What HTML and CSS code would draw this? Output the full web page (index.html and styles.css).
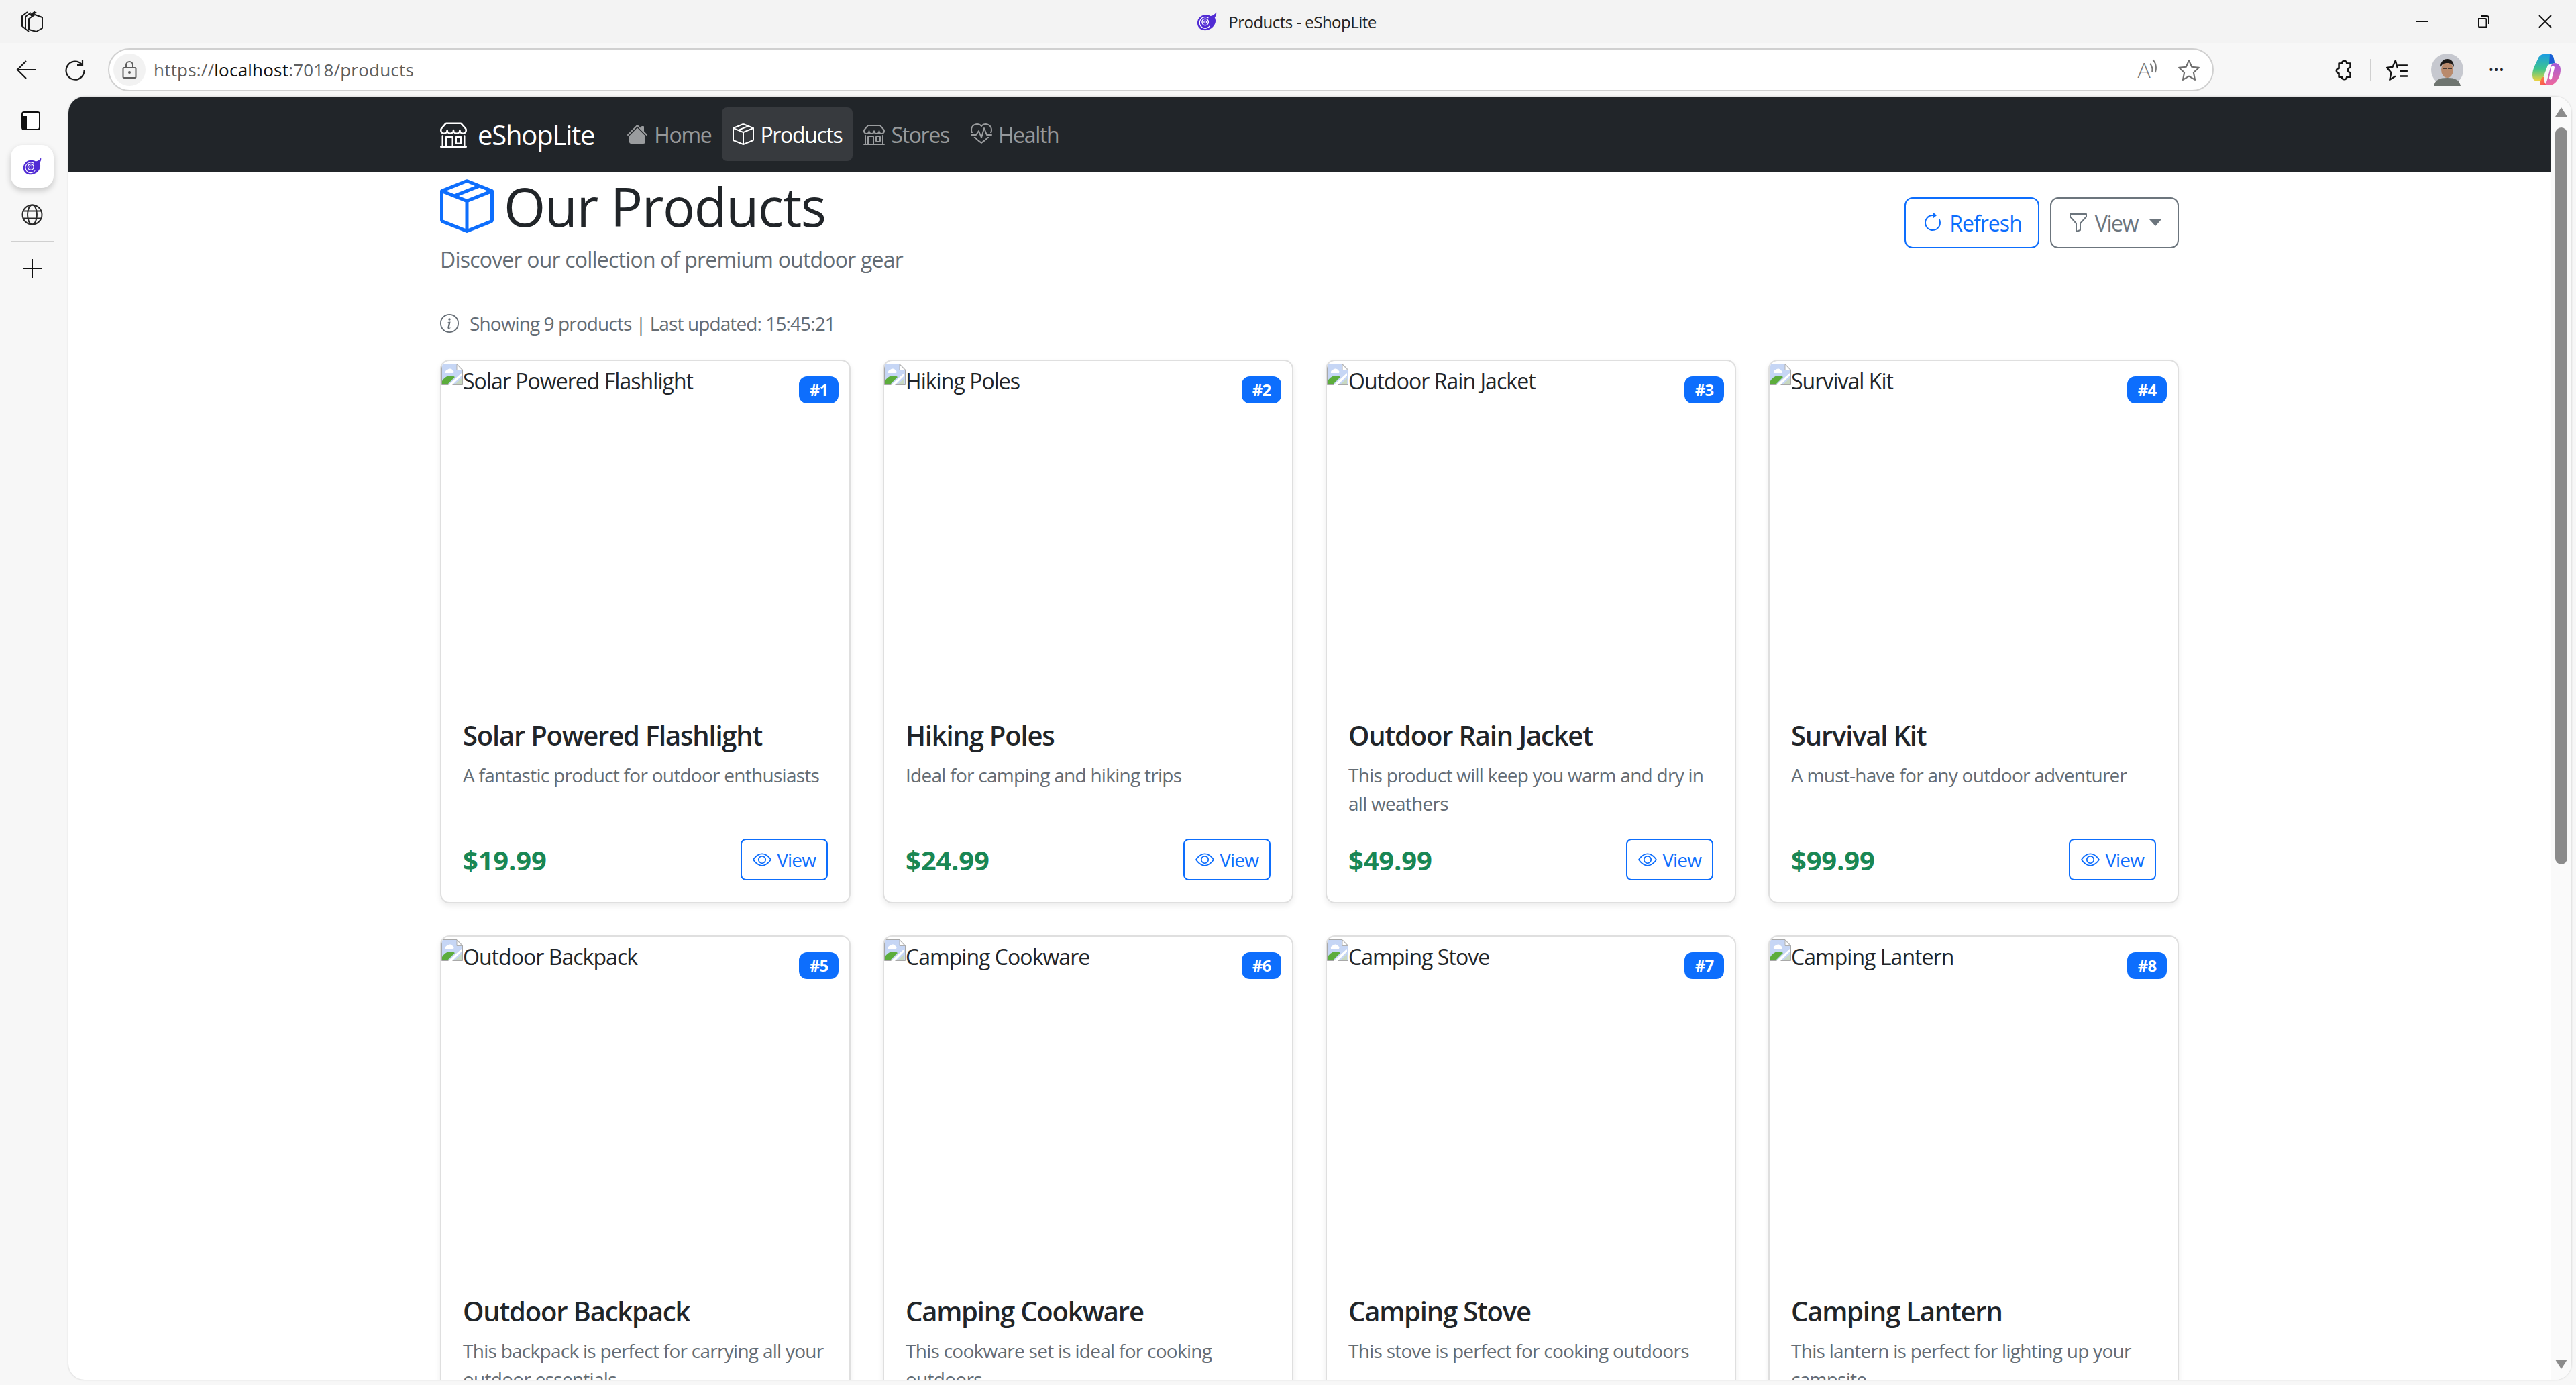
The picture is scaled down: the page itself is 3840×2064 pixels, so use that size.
FILE: index.html
```html
<!DOCTYPE html>
<html>
<head>
	<title>Products - eShopLite</title>
	<link rel="stylesheet" href="styles.css">
</head>
<body>

<svg class="defs" width="0" height="0">
	<symbol id="i-box" viewBox="0 0 16 16"><path d="M8.186 1.113a.5.5 0 0 0-.372 0L1.846 3.5l2.404.961L10.404 2l-2.218-.887zm3.564 1.426L5.596 5 8 5.961 14.154 3.5l-2.404-.961zm3.25 1.7-6.5 2.6v7.922l6.5-2.6V4.24zM7.5 14.762V6.838L1 4.239v7.925l6.5 2.6zM7.443.184a1.5 1.5 0 0 1 1.114 0l7.129 2.852A.5.5 0 0 1 16 3.5v8.662a1 1 0 0 1-.629.928l-7.185 2.874a.5.5 0 0 1-.372 0L.63 13.09a1 1 0 0 1-.63-.928V3.5a.5.5 0 0 1 .314-.464L7.443.184z"/></symbol>
	<symbol id="i-shop" viewBox="0 0 16 16"><path d="M2.97 1.35A1 1 0 0 1 3.73 1h8.54a1 1 0 0 1 .76.35l2.609 3.044A1.5 1.5 0 0 1 16 5.37v.255a2.375 2.375 0 0 1-4.25 1.458A2.371 2.371 0 0 1 9.875 8 2.37 2.37 0 0 1 8 7.083 2.37 2.37 0 0 1 6.125 8a2.37 2.37 0 0 1-1.875-.917A2.375 2.375 0 0 1 0 5.625V5.37a1.5 1.5 0 0 1 .361-.976l2.61-3.045zm1.78 4.275a1.375 1.375 0 0 0 2.75 0 .5.5 0 0 1 1 0 1.375 1.375 0 0 0 2.75 0 .5.5 0 0 1 1 0 1.375 1.375 0 1 0 2.75 0V5.37a.5.5 0 0 0-.12-.325L12.27 2H3.73L1.12 5.045A.5.5 0 0 0 1 5.37v.255a1.375 1.375 0 0 0 2.75 0 .5.5 0 0 1 1 0zM1.5 8.5A.5.5 0 0 1 2 9v6h1v-5a1 1 0 0 1 1-1h3a1 1 0 0 1 1 1v5h6V9a.5.5 0 0 1 1 0v6h.5a.5.5 0 0 1 0 1H.5a.5.5 0 0 1 0-1H1V9a.5.5 0 0 1 .5-.5zM4 15h3v-5H4v5zm5-5a1 1 0 0 1 1-1h2a1 1 0 0 1 1 1v3a1 1 0 0 1-1 1h-2a1 1 0 0 1-1-1v-3zm3 0h-2v3h2v-3z"/></symbol>
	<symbol id="i-house" viewBox="0 0 16 16"><path d="M8.707 1.5a1 1 0 0 0-1.414 0L.646 8.146a.5.5 0 0 0 .708.708L8 2.207l6.646 6.647a.5.5 0 0 0 .708-.708L13 5.793V2.5a.5.5 0 0 0-.5-.5h-1a.5.5 0 0 0-.5.5v1.293L8.707 1.5Z"/><path d="m8 3.293 6 6V13.5a1.5 1.5 0 0 1-1.5 1.5h-9A1.5 1.5 0 0 1 2 13.5V9.293l6-6Z"/></symbol>
	<symbol id="i-heart" viewBox="0 0 16 16"><path d="m8 2.748-.717-.737C5.6.281 2.514.878 1.4 3.053.918 3.995.78 5.323 1.508 7H.43c-2.128-5.697 4.165-8.83 7.394-5.857.06.055.119.112.176.171a3.12 3.12 0 0 1 .176-.17c3.23-2.974 9.522.159 7.394 5.856h-1.078c.728-1.677.59-3.005.108-3.947C13.486.878 10.4.28 8.717 2.01L8 2.748ZM2.212 10h1.315C4.593 11.183 6.05 12.458 8 13.795c1.949-1.337 3.407-2.612 4.473-3.795h1.315c-1.265 1.566-3.14 3.25-5.788 5-2.648-1.75-4.523-3.434-5.788-5Z"/><path d="M10.464 3.314a.5.5 0 0 0-.945.049L7.921 8.956 6.464 5.314a.5.5 0 0 0-.88-.091L3.732 8H.5a.5.5 0 0 0 0 1H4a.5.5 0 0 0 .416-.223l1.473-2.209 1.647 4.118a.5.5 0 0 0 .945-.049l1.598-5.593 1.457 3.642A.5.5 0 0 0 12 9h3.5a.5.5 0 0 0 0-1h-3.162l-1.874-4.686Z"/></symbol>
	<symbol id="i-refresh" viewBox="0 0 16 16"><path d="M8 3a5 5 0 1 0 4.546 2.914.5.5 0 0 1 .908-.417A6 6 0 1 1 8 2v1z"/><path d="M8 4.466V.534a.25.25 0 0 1 .41-.192l2.36 1.966c.12.1.12.284 0 .384L8.41 4.658A.25.25 0 0 1 8 4.466z"/></symbol>
	<symbol id="i-funnel" viewBox="0 0 16 16"><path d="M1.5 1.5A.5.5 0 0 1 2 1h12a.5.5 0 0 1 .5.5v2a.5.5 0 0 1-.128.334L10 8.692V13.5a.5.5 0 0 1-.342.474l-3 1A.5.5 0 0 1 6 14.5V8.692L1.628 3.834A.5.5 0 0 1 1.5 3.5v-2zm1 .5v1.308l4.372 4.858A.5.5 0 0 1 7 8.5v5.306l2-.666V8.5a.5.5 0 0 1 .128-.334L13.5 3.308V2h-11z"/></symbol>
	<symbol id="i-eye" viewBox="0 0 16 16"><path d="M16 8s-3-5.5-8-5.5S0 8 0 8s3 5.5 8 5.5S16 8 16 8zM1.173 8a13.133 13.133 0 0 1 1.66-2.043C4.12 4.668 5.88 3.5 8 3.5c2.12 0 3.879 1.168 5.168 2.457A13.133 13.133 0 0 1 14.828 8c-.058.087-.122.183-.195.288-.335.48-.83 1.12-1.465 1.755C11.879 11.332 10.119 12.5 8 12.5c-2.12 0-3.879-1.168-5.168-2.457A13.134 13.134 0 0 1 1.172 8z"/><path d="M8 5.500a2.500 2.500 0 1 0 0 5 2.500 2.500 0 0 0 0-5zM4.500 8a3.500 3.500 0 1 1 7 0 3.500 3.500 0 0 1-7 0z"/></symbol>
	<symbol id="i-info" viewBox="0 0 16 16"><path d="M8 15A7 7 0 1 1 8 1a7 7 0 0 1 0 14zm0 1A8 8 0 1 0 8 0a8 8 0 0 0 0 16z"/><path d="m8.93 6.588-2.29.287-.082.38.45.083c.294.07.352.176.288.469l-.738 3.468c-.194.897.105 1.319.808 1.319.545 0 1.178-.252 1.465-.598l.088-.416c-.2.176-.492.246-.686.246-.275 0-.375-.193-.304-.533L8.93 6.588zM9 4.5a1 1 0 1 1-2 0 1 1 0 0 1 2 0z"/></symbol>
	<symbol id="i-broken" viewBox="0 0 32 32">
		<path d="M.5.5H23L31.500 9v22.500H.5z" fill="#fff" stroke="#a8a8a8"/>
		<path d="M1 1h21.500L31 9.500V31H1z" fill="#c6d6f5"/>
		<path d="M23 1v8.500h8z" fill="#fff" stroke="#b0b0b0"/>
		<path d="M6 14a4 4 0 0 1 3-5 5 5 0 0 1 8 1 3 3 0 0 1 1 4z" fill="#fff"/>
		<path d="M1 31v-5c5-8 13-10 19-6l-11 11z" fill="#5cad3c"/>
		<path d="M10 32 30 14v4L16 32z" fill="#fff"/>
		<path d="M20 31l10-9v9z" fill="#c8d8c0"/>
	</symbol>
	<symbol id="i-blazor" viewBox="0 0 32 32">
		<path d="M31 1c.6 4-.5 6.500-2.500 8.500 1.500 3 2 6.500.5 10C26.500 26 20 30 13 30 5.500 30 1 25 1 18.500 1 11 7 5.500 14 5.500c3.500 0 6 .8 8 2C25 7 29 5 31 1z" fill="#512bd4"/>
		<circle cx="13.500" cy="18" r="9" fill="none" stroke="#fff" stroke-width="1.300" stroke-dasharray="42 15" transform="rotate(35 13.500 18)"/>
		<circle cx="13.500" cy="17" r="5" fill="none" stroke="#fff" stroke-width="1.600"/>
		<circle cx="13.500" cy="17" r="2" fill="none" stroke="#fff" stroke-width="1.300"/>
	</symbol>
</svg>

<div class="window">

	<div class="titlebar">
		<svg class="ico tabs-ico" viewBox="0 0 32 32"><path d="M12 7 20 1.500M6 27 1 23V8l8-6M11 31 6 27V9l8-6M14 8l8-6M11 12l9-6 11 4v16l-9 5-11-3z" fill="none" stroke="#1a1a1a" stroke-width="2" stroke-linejoin="round"/></svg>
		<div class="title"><svg class="favicon"><use href="#i-blazor"/></svg>Products - eShopLite</div>
		<div class="winctl">
			<svg class="ico win" viewBox="0 0 20 20"><path d="M1 10h18" stroke="#111" stroke-width="2"/></svg>
			<svg class="ico win" viewBox="0 0 20 20"><path d="M3 6h10a1.500 1.500 0 0 1 1.500 1.500V17a1.500 1.500 0 0 1-1.500 1.500H4.500A1.500 1.500 0 0 1 3 17zM7 2h8a3 3 0 0 1 3 3v9" fill="none" stroke="#111" stroke-width="2"/></svg>
			<svg class="ico win" viewBox="0 0 20 20"><path d="M1 1 19 19M19 1 1 19" stroke="#111" stroke-width="1.800"/></svg>
		</div>
	</div>

	<div class="toolbar">
		<svg class="ico tool-btn back" viewBox="0 0 32 32"><path d="M30 16H3M15 3 2 16l13 13" fill="none" stroke="#1a1a1a" stroke-width="2.200"/></svg>
		<svg class="ico tool-btn reload" viewBox="0 0 32 32"><path d="M26 8a13.500 13.500 0 1 0 3.500 8M27 1v8h-8" fill="none" stroke="#1a1a1a" stroke-width="2.200"/></svg>
		<div class="addressbar">
			<span class="lock"><svg class="ico" viewBox="0 0 24 28"><path d="M7 11V7a5 5 0 0 1 10 0v4M4 11h16a1.500 1.500 0 0 1 1.500 1.500v12A1.500 1.500 0 0 1 20 26H4a1.500 1.500 0 0 1-1.500-1.500v-12A1.500 1.500 0 0 1 4 11z" fill="none" stroke="#5d5d5d" stroke-width="2"/><circle cx="12" cy="18" r="2" fill="#5d5d5d"/></svg></span>
			<span class="url">https://<b>localhost</b>:7018/products</span>
			<span class="read"><span class="read-a">A</span><svg class="ico read-waves" viewBox="0 0 12 28"><path d="M1 8c3 3 4 7 3 12M5 2c5 5 6 12 4 19" fill="none" stroke="#777" stroke-width="1.800"/></svg></span>
			<svg class="ico fav" viewBox="0 0 32 32"><path d="M16 3l4 9 10 1-7.500 7 2 10L16 25l-8.500 5 2-10L2 13l10-1z" fill="none" stroke="#6f6f6f" stroke-width="2" stroke-linejoin="round"/></svg>
		</div>
		<div class="tool-right">
			<svg class="ico puzzle" viewBox="0 0 32 32"><path d="M9 7h4a3.500 3.500 0 1 1 7 0h5v6a3.500 3.500 0 0 0 0 7v6h-5a3.500 3.500 0 0 1-7 0H9v-5a3.500 3.500 0 0 1 0-7z" fill="none" stroke="#111" stroke-width="2.400" stroke-linejoin="round"/></svg>
			<span class="tool-sep"></span>
			<svg class="ico favlist" viewBox="0 0 32 32"><path d="M16 14 13 3 9 12l-8 1 6 7-2 10 8-5" fill="none" stroke="#111" stroke-width="2.200" stroke-linejoin="round"/><path d="M17 10h13M19 18h11M19 25h11" stroke="#111" stroke-width="2.400"/></svg>
			<svg class="avatar" viewBox="0 0 48 48">
				<circle cx="24" cy="24" r="24" fill="#c6c8cf"/>
				<path d="M4 48c2-9 8-12 20-12s18 3 20 12z" fill="#6f7570"/>
				<ellipse cx="24" cy="24" rx="9" ry="12" fill="#b98a6c"/>
				<path d="M14 20c0-9 5-12 10-12s10 3 10 12c-2-4-5-6-10-6s-8 2-10 6z" fill="#1d1a18"/>
				<path d="M17 22h6M25 22h6" stroke="#222" stroke-width="1.500"/>
			</svg>
			<span class="dots">•••</span>
			<svg class="copilot" viewBox="0 0 44 48">
				<defs>
					<linearGradient id="cop1" x1="0" y1="0" x2="0" y2="1"><stop offset="0" stop-color="#1b9de2"/><stop offset=".55" stop-color="#3fc58c"/><stop offset="1" stop-color="#f4d23c"/></linearGradient>
					<linearGradient id="cop2" x1="0" y1="0" x2="0" y2="1"><stop offset="0" stop-color="#a35bd8"/><stop offset="1" stop-color="#f0689c"/></linearGradient>
					<linearGradient id="cop3" x1="0" y1="0" x2="1" y2="1"><stop offset="0" stop-color="#ff8a3d"/><stop offset="1" stop-color="#f4405c"/></linearGradient>
				</defs>
				<path d="M18 1h9c4 0 5 3 6 7l1 6-10 3-6 16c-1 5-4 8-9 8-6 0-8-4-8-9 0-10 6-18 9-26 2-3 4-5 8-5z" fill="url(#cop1)"/>
				<path d="M27 1c4 0 5 3 6 7l1 6-8 1z" fill="#1a5fd6"/>
				<path d="M34 14c5 0 9 3 9 10 0 9-5 17-9 20-2 2-5 3-8 3H17c3-1 5-4 6-8l5-19c1-4 3-6 6-6z" fill="url(#cop2)"/>
				<path d="M13 47h12c-4 0-6-3-6-7v-6l-4 2-3 7z" fill="url(#cop3)"/>
				<path d="M29 20c2-3 5-2 5 1l-4 16c-1 3-4 2-4-1z" fill="#fff"/>
			</svg>
		</div>
	</div>

	<div class="main">

		<div class="sidebar">
			<svg class="ico side-ico" viewBox="0 0 28 28"><path d="M4 1h20a3 3 0 0 1 3 3v20a3 3 0 0 1-3 3H4a3 3 0 0 1-3-3V4a3 3 0 0 1 3-3z" fill="#fff" stroke="#111" stroke-width="2"/><path d="M1 7h7v20H4a3 3 0 0 1-3-3z" fill="#111"/></svg>
			<div class="side-tile"><svg class="side-blazor"><use href="#i-blazor"/></svg></div>
			<svg class="ico side-globe" viewBox="0 0 32 32"><g fill="none" stroke="#2a2a2a" stroke-width="2"><circle cx="16" cy="16" r="14.500"/><ellipse cx="16" cy="16" rx="7" ry="14.500"/><path d="M3 10.500h26M3 21.500h26"/></g></svg>
			<div class="side-rule"></div>
			<svg class="ico side-plus" viewBox="0 0 28 28"><path d="M0 14h28M14 0v28" stroke="#111" stroke-width="2"/></svg>
		</div>

		<div class="viewport">
			<div class="page">

				<nav class="navbar">
					<div class="nav-inner">
						<a class="brand"><svg class="bi brand-ico"><use href="#i-shop"/></svg>eShopLite</a>
						<a class="nav-link"><svg class="bi"><use href="#i-house"/></svg>Home</a>
						<a class="nav-link active"><svg class="bi"><use href="#i-box"/></svg>Products</a>
						<a class="nav-link"><svg class="bi"><use href="#i-shop"/></svg>Stores</a>
						<a class="nav-link"><svg class="bi"><use href="#i-heart"/></svg>Health</a>
					</div>
				</nav>

				<div class="container">

					<div class="page-head">
						<div>
							<h1><svg class="bi head-ico"><use href="#i-box"/></svg>Our Products</h1>
							<p class="lead">Discover our collection of premium outdoor gear</p>
						</div>
						<div class="head-btns">
							<button class="btn btn-blue"><svg class="bi"><use href="#i-refresh"/></svg>Refresh</button>
							<button class="btn btn-grey"><svg class="bi"><use href="#i-funnel"/></svg>View<span class="caret"></span></button>
						</div>
					</div>

					<p class="status"><svg class="bi"><use href="#i-info"/></svg>Showing 9 products | Last updated: 15:45:21</p>

					<div class="grid">

						<div class="card">
							<div class="card-img"><svg class="broken"><use href="#i-broken"/></svg>Solar Powered Flashlight<span class="badge">#1</span></div>
							<div class="card-body">
								<h5>Solar Powered Flashlight</h5>
								<p class="desc">A fantastic product for outdoor enthusiasts</p>
								<div class="card-foot"><span class="price">$19.99</span><button class="btn btn-blue btn-sm"><svg class="bi"><use href="#i-eye"/></svg>View</button></div>
							</div>
						</div>

						<div class="card">
							<div class="card-img"><svg class="broken"><use href="#i-broken"/></svg>Hiking Poles<span class="badge">#2</span></div>
							<div class="card-body">
								<h5>Hiking Poles</h5>
								<p class="desc">Ideal for camping and hiking trips</p>
								<div class="card-foot"><span class="price">$24.99</span><button class="btn btn-blue btn-sm"><svg class="bi"><use href="#i-eye"/></svg>View</button></div>
							</div>
						</div>

						<div class="card">
							<div class="card-img"><svg class="broken"><use href="#i-broken"/></svg>Outdoor Rain Jacket<span class="badge">#3</span></div>
							<div class="card-body">
								<h5>Outdoor Rain Jacket</h5>
								<p class="desc">This product will keep you warm and dry in all weathers</p>
								<div class="card-foot"><span class="price">$49.99</span><button class="btn btn-blue btn-sm"><svg class="bi"><use href="#i-eye"/></svg>View</button></div>
							</div>
						</div>

						<div class="card">
							<div class="card-img"><svg class="broken"><use href="#i-broken"/></svg>Survival Kit<span class="badge">#4</span></div>
							<div class="card-body">
								<h5>Survival Kit</h5>
								<p class="desc">A must-have for any outdoor adventurer</p>
								<div class="card-foot"><span class="price">$99.99</span><button class="btn btn-blue btn-sm"><svg class="bi"><use href="#i-eye"/></svg>View</button></div>
							</div>
						</div>

						<div class="card">
							<div class="card-img"><svg class="broken"><use href="#i-broken"/></svg>Outdoor Backpack<span class="badge">#5</span></div>
							<div class="card-body">
								<h5>Outdoor Backpack</h5>
								<p class="desc">This backpack is perfect for carrying all your outdoor essentials</p>
							</div>
						</div>

						<div class="card">
							<div class="card-img"><svg class="broken"><use href="#i-broken"/></svg>Camping Cookware<span class="badge">#6</span></div>
							<div class="card-body">
								<h5>Camping Cookware</h5>
								<p class="desc">This cookware set is ideal for cooking outdoors</p>
							</div>
						</div>

						<div class="card">
							<div class="card-img"><svg class="broken"><use href="#i-broken"/></svg>Camping Stove<span class="badge">#7</span></div>
							<div class="card-body">
								<h5>Camping Stove</h5>
								<p class="desc">This stove is perfect for cooking outdoors</p>
							</div>
						</div>

						<div class="card">
							<div class="card-img"><svg class="broken"><use href="#i-broken"/></svg>Camping Lantern<span class="badge">#8</span></div>
							<div class="card-body">
								<h5>Camping Lantern</h5>
								<p class="desc">This lantern is perfect for lighting up your campsite</p>
							</div>
						</div>

					</div>
				</div>
			</div>

			<div class="scrollbar">
				<span class="arrow-up"></span>
				<span class="thumb"></span>
				<span class="arrow-down"></span>
			</div>
		</div>

	</div>
</div>

</body>
</html>
```

FILE: styles.css
```css
* {
	box-sizing: border-box;
}

html, body {
	margin: 0;
	height: 100%;
	overflow: hidden;
}

body {
	font-family: "Open Sans", "Noto Sans", sans-serif;
	font-size: 32px;
	letter-spacing: -0.025em;
	color: #212529;
	background: #f7f7f7;
}

.defs {
	position: absolute;
}

.window {
	height: 2064px;
	display: flex;
	flex-direction: column;
}

.ico {
	display: block;
	flex: none;
}

/* title bar */

.titlebar {
	height: 64px;
	flex: none;
	background: #f3f3f3;
	display: flex;
	align-items: center;
	justify-content: space-between;
	padding: 0 36px 0 32px;
}

.tabs-ico {
	width: 32px;
	height: 32px;
}

.title {
	display: flex;
	align-items: center;
	gap: 17px;
	font-size: 24px;
	letter-spacing: -0.022em;
	color: #222;
	margin-left: 172px;
}

.favicon {
	width: 30px;
	height: 30px;
}

.winctl {
	display: flex;
	gap: 72px;
}

.win {
	width: 20px;
	height: 20px;
}

/* toolbar */

.toolbar {
	height: 80px;
	flex: none;
	display: flex;
	align-items: flex-start;
	padding: 8px 0 0 24px;
}

.tool-btn {
	width: 32px;
	height: 32px;
	margin-top: 16px;
}

.reload {
	margin-left: 40px;
}

.addressbar {
	margin-left: 33px;
	width: 3139px;
	height: 64px;
	background: #fff;
	border: 2px solid #d0d0d0;
	border-radius: 32px;
	display: flex;
	align-items: center;
	padding-left: 6px;
}

.lock {
	width: 48px;
	height: 48px;
	border-radius: 50%;
	background: #f2f2f2;
	display: flex;
	align-items: center;
	justify-content: center;
}

.lock svg {
	width: 24px;
	height: 28px;
}

.url {
	margin-left: 12px;
	font-size: 26px;
	letter-spacing: 0.008em;
	color: #5f5f5f;
	flex: 1;
}

.url b {
	font-weight: 400;
	color: #111;
}

.read {
	display: flex;
	align-items: center;
}

.read-a {
	font-size: 32px;
	font-weight: 300;
	line-height: 44px;
	color: #777;
}

.read-waves {
	width: 12px;
	height: 28px;
	margin: -6px 0 0 -1px;
}

.fav {
	width: 34px;
	height: 34px;
	margin: 0 18px 0 30px;
}

.tool-right {
	display: flex;
	align-items: center;
	height: 64px;
}

.puzzle {
	width: 34px;
	height: 34px;
	margin-left: 177px;
}

.tool-sep {
	width: 2px;
	height: 32px;
	background: #d0d0d0;
	margin: 0 22px 0 22px;
}

.favlist {
	width: 34px;
	height: 34px;
}

.avatar {
	width: 48px;
	height: 48px;
	margin-left: 33px;
}

.dots {
	font-size: 18px;
	letter-spacing: 1px;
	color: #222;
	margin-left: 38px;
}

.copilot {
	width: 44px;
	height: 48px;
	margin-left: 41px;
}

/* side strip and page */

.main {
	flex: 1;
	display: flex;
	min-height: 0;
}

.sidebar {
	width: 102px;
	flex: none;
	display: flex;
	flex-direction: column;
	padding: 22px 0 0 16px;
}

.side-ico {
	width: 28px;
	height: 28px;
	margin-left: 16px;
}

.side-tile {
	width: 64px;
	height: 64px;
	margin-top: 22px;
	background: #fff;
	border-radius: 18px;
	box-shadow: 0 4px 10px rgba(0, 0, 0, .2);
	display: flex;
	align-items: center;
	justify-content: center;
}

.side-blazor {
	width: 30px;
	height: 28px;
}

.side-globe {
	width: 32px;
	height: 32px;
	margin: 24px 0 0 16px;
}

.side-rule {
	width: 64px;
	height: 2px;
	background: #d0d0d0;
	margin-top: 23px;
}

.side-plus {
	width: 28px;
	height: 28px;
	margin: 25px 0 0 18px;
}

.viewport {
	flex: 1;
	display: flex;
	margin: 0 7px 8px 0;
	background: #fff;
	border-radius: 24px;
	overflow: hidden;
	box-shadow: 0 0 3px rgba(0, 0, 0, .2);
}

.page {
	flex: 1;
	min-width: 0;
	overflow: hidden;
}

.scrollbar {
	width: 31px;
	flex: none;
	background: #fafafa;
	display: flex;
	flex-direction: column;
	align-items: center;
	padding-top: 16px;
}

.arrow-up, .arrow-down {
	width: 0;
	height: 0;
	border-left: 9px solid transparent;
	border-right: 9px solid transparent;
}

.arrow-up {
	border-bottom: 14px solid #8b8b8b;
}

.arrow-down {
	border-top: 14px solid #8b8b8b;
	margin-top: 738px;
}

.thumb {
	width: 18px;
	height: 1098px;
	margin-top: 16px;
	background: #8b8b8b;
	border-radius: 9px;
}

/* navbar */

.navbar {
	height: 112px;
	background: #212529;
}

.nav-inner {
	width: 2640px;
	height: 100%;
	margin: 0 auto;
	padding: 0 24px;
	display: flex;
	align-items: center;
}

.bi {
	width: 32px;
	height: 32px;
	fill: currentColor;
	flex: none;
}

.brand {
	display: flex;
	align-items: center;
	gap: 16px;
	font-size: 40px;
	letter-spacing: -0.03em;
	color: #fff;
	margin-right: 32px;
}

.brand-ico {
	width: 40px;
	height: 40px;
}

.nav-link {
	display: flex;
	align-items: center;
	gap: 9px;
	height: 80px;
	padding: 0 16px;
	border-radius: 8px;
	letter-spacing: -0.042em;
	color: rgba(255, 255, 255, .55);
}

.nav-link.active {
	color: #fff;
	background: #373a3e;
}

/* page header */

.container {
	width: 2640px;
	margin: 0 auto;
	padding: 3px 24px 0;
}

.page-head {
	display: flex;
	align-items: center;
	justify-content: space-between;
}

h1 {
	margin: 0 0 8px;
	font-size: 80px;
	font-weight: 500;
	letter-spacing: -0.018em;
	line-height: 96px;
	display: flex;
	align-items: center;
	gap: 15px;
}

.head-ico {
	width: 80px;
	height: 80px;
	color: #0d6efd;
}

.lead {
	margin: 0;
	font-size: 32px;
	line-height: 48px;
	color: #646c74;
}

.head-btns {
	display: flex;
	gap: 16px;
	margin-top: -6px;
}

.btn {
	font: inherit;
	letter-spacing: -0.03em;
	height: 76px;
	padding: 0 24px;
	background: #fff;
	border: 2px solid;
	border-radius: 12px;
	display: flex;
	align-items: center;
	gap: 9px;
}

.btn-blue {
	color: #0d6efd;
	border-color: #0d6efd;
}

.btn-grey {
	color: #6c757d;
	border-color: #6c757d;
	letter-spacing: -0.045em;
}

.caret {
	width: 0;
	height: 0;
	margin-left: 8px;
	border-left: 9px solid transparent;
	border-right: 9px solid transparent;
	border-top: 10px solid currentColor;
}

.status {
	margin: 50px 0 33px;
	font-size: 28px;
	letter-spacing: -0.032em;
	line-height: 42px;
	color: #646c74;
	display: flex;
	align-items: center;
	gap: 16px;
}

.status .bi {
	width: 28px;
	height: 28px;
}

/* product cards */

.grid {
	display: grid;
	grid-template-columns: repeat(4, 612px);
	gap: 48px;
}

.card {
	background: #fff;
	border: 2px solid #dfdfdf;
	border-radius: 14px;
	box-shadow: 0 4px 8px rgba(0, 0, 0, .075);
	overflow: hidden;
}

.card-img {
	position: relative;
	height: 502px;
	line-height: 52px;
	font-size: 32px;
	letter-spacing: -0.03em;
	display: flex;
	align-items: flex-start;
	padding-top: 4px;
}

.broken {
	width: 32px;
	height: 32px;
	flex: none;
}

.badge {
	position: absolute;
	top: 23px;
	right: 16px;
	width: 59px;
	height: 40px;
	border-radius: 12px;
	background: #0d6efd;
	color: #fff;
	font-size: 24px;
	font-weight: 700;
	line-height: 40px;
	text-align: center;
}

.card-body {
	padding: 32px;
}

h5 {
	margin: 0 0 14px;
	font-size: 40px;
	font-weight: 600;
	letter-spacing: -0.03em;
	line-height: 48px;
}

.desc {
	margin: 0 0 32px;
	min-height: 84px;
	font-size: 28px;
	letter-spacing: -0.026em;
	line-height: 42px;
	color: #646c74;
}

.card-foot {
	display: flex;
	align-items: center;
	justify-content: space-between;
}

.price {
	font-size: 40px;
	font-weight: 700;
	letter-spacing: -0.005em;
	color: #198754;
}

.btn-sm {
	height: 62px;
	padding: 0 16px;
	border-radius: 8px;
	font-size: 28px;
	gap: 8px;
}

.btn-sm .bi {
	width: 28px;
	height: 28px;
}
```
